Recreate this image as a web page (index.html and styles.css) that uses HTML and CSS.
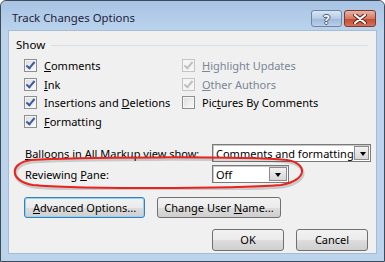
FILE: index.html
```html
<!DOCTYPE html>
<html lang="en">
<head>
  <meta charset="UTF-8">
  <title>Track Changes Options</title>
  <link rel="stylesheet" href="styles.css">
</head>
<body>
  <div class="window">
    <div class="titlebar">
      <span class="title">Track Changes Options</span>
      <div class="caption-buttons">
        <div class="cap-btn help">?</div>
        <div class="cap-btn close">
          <svg width="14" height="10" viewBox="0 0 14 10">
            <path d="M2 1 L12 9 M12 1 L2 9" stroke="#5a2316" stroke-width="4" stroke-linecap="round"/>
            <path d="M2 1 L12 9 M12 1 L2 9" stroke="#fff" stroke-width="2.2" stroke-linecap="round"/>
          </svg>
        </div>
      </div>
    </div>

    <div class="client">
      <div class="group-head">
        <span>Show</span>
        <div class="rule"></div>
      </div>

      <div class="checks">
        <label class="check"><span class="box checked"></span><span><u>C</u>omments</span></label>
        <label class="check disabled"><span class="box checked"></span><span><u>H</u>ighlight Updates</span></label>
        <label class="check"><span class="box checked"></span><span><u>I</u>nk</span></label>
        <label class="check disabled"><span class="box checked"></span><span><u>O</u>ther Authors</span></label>
        <label class="check"><span class="box checked"></span><span>Insertions and <u>D</u>eletions</span></label>
        <label class="check"><span class="box"></span><span>Pic<u>t</u>ures By Comments</span></label>
        <label class="check"><span class="box checked"></span><span><u>F</u>ormatting</span></label>
      </div>

      <div class="field-row balloons">
        <span class="field-label"><u>B</u>alloons in All Markup view show:</span>
        <div class="combo wide">
          <span class="combo-value">Comments and formatting</span>
          <span class="combo-btn"></span>
        </div>
      </div>

      <div class="field-row pane">
        <span class="field-label">Reviewing <u>P</u>ane:</span>
        <div class="combo narrow">
          <span class="combo-value">Off</span>
          <span class="combo-btn"></span>
        </div>
        <svg class="oval" width="296" height="34" viewBox="0 0 296 34">
          <path d="M21 6 C 60 3, 232 2, 277 6 C 297 9, 299 26, 271 31 C 221 35, 61 35, 23 31 C -1 27, -1 9, 21 6 Z" fill="none" stroke="rgba(0,0,0,0.16)" stroke-width="3"/>
          <path d="M20 4 C 60 1, 230 0, 276 4 C 296 7, 298 24, 270 29 C 220 33, 60 33, 22 29 C -2 25, -2 7, 20 4 Z" fill="none" stroke="#e8221c" stroke-width="2"/>
        </svg>
      </div>

      <div class="button-row">
        <div class="btn focused"><span><u>A</u>dvanced Options...</span></div>
        <div class="btn"><span>Change User <u>N</u>ame...</span></div>
      </div>

      <div class="button-row footer">
        <div class="btn dlg"><span>OK</span></div>
        <div class="btn dlg"><span>Cancel</span></div>
      </div>
    </div>
  </div>
</body>
</html>
```

FILE: styles.css
```css
body {
  margin: 0;
  background: #fff;
  font-family: "Noto Sans", "Open Sans", sans-serif;
  font-size: 11px;
  color: #000;
}
.window {
  width: 383px;
  height: 260px;
  border: 1px solid #3e4a57;
  border-radius: 6px 6px 0 0;
  background: #bcd3ec;
  display: flex;
  flex-direction: column;
}
.titlebar {
  height: 29px;
  display: flex;
  align-items: flex-start;
  justify-content: space-between;
  background: linear-gradient(#a8c4e4, #bad2ec);
  border-radius: 6px 6px 0 0;
}
.title {
  margin: 9px 0 0 11px;
  font-size: 11.4px;
  color: #1e1e3c;
}
.caption-buttons {
  display: flex;
  gap: 2px;
  margin: 9px 8px 0 0;
}
.cap-btn {
  width: 29px;
  height: 15px;
  border-radius: 3px;
  display: flex;
  align-items: center;
  justify-content: center;
}
.help {
  border: 1px solid #6d86a8;
  background: linear-gradient(#dbe6f3 0%, #b5cbe4 50%, #9cb8da 51%, #bcd0e8 100%);
  color: #fff;
  font-weight: bold;
  font-size: 13px;
  text-shadow: 0 0 1px #2e4466, 1px 0 0 #4d6688, -1px 0 0 #4d6688, 0 1px 0 #4d6688, 0 -1px 0 #4d6688;
}
.close {
  width: 30px;
  border: 1px solid #7e3b2c;
  background: linear-gradient(#e8b3a6 0%, #d67862 50%, #c4472e 51%, #d5735a 100%);
}
.client {
  flex: 1;
  margin: 0 7px 7px 7px;
  background: #f0f0f0;
  border: 1px solid #a5bcd6;
  padding: 0 8px 0 7px;
  display: flex;
  flex-direction: column;
}
.group-head {
  display: flex;
  align-items: center;
  gap: 6px;
  margin-top: 5px;
  height: 17px;
  font-size: 11.5px;
}
.rule {
  flex: 1;
  height: 1px;
  background: #d5dfe5;
  margin-top: 1px;
}
.checks {
  display: grid;
  grid-template-columns: 158px 1fr;
  grid-auto-rows: 18.7px;
  margin: 3px 0 0 8px;
}
.check {
  display: flex;
  align-items: center;
  gap: 7px;
  white-space: nowrap;
}
.check.disabled {
  color: #7b8595;
}
.box {
  width: 11px;
  height: 11px;
  border: 1px solid #8e8f8f;
  background: linear-gradient(135deg, #dcdcdc, #fbfbfb);
  box-shadow: inset 0 0 0 1px #f4f4f4;
  position: relative;
  flex-shrink: 0;
}
.box.checked::after {
  content: "";
  position: absolute;
  left: 3px;
  top: 0px;
  width: 3px;
  height: 7px;
  border: solid #3d5aa0;
  border-width: 0 2px 2px 0;
  transform: rotate(40deg);
}
.disabled .box {
  border-color: #c4c4c4;
  background: #f4f4f4;
}
.disabled .box.checked::after {
  border-color: #c0c0c0;
}
.field-row {
  display: flex;
  align-items: center;
  margin-left: 9px;
  height: 19px;
  position: relative;
}
.balloons {
  margin-top: 13px;
}
.pane {
  margin-top: 2px;
}
.field-label {
  width: 187px;
  flex-shrink: 0;
  white-space: nowrap;
}
.combo {
  height: 16px;
  flex-shrink: 0;
  border: 1px solid #7a7a7a;
  background: #fff;
  display: flex;
  align-items: center;
  justify-content: space-between;
  box-shadow: inset 1px 1px 0 #c8c8c8;
}
.combo.wide {
  width: 157px;
}
.combo.narrow {
  width: 75px;
}
.combo-value {
  padding-left: 3px;
  white-space: nowrap;
}
.combo-btn {
  width: 18px;
  height: 14px;
  margin-right: 1px;
  background: linear-gradient(#f2f2f2, #d6d6d6);
  border: 1px solid #8c8c8c;
  box-sizing: border-box;
  position: relative;
}
.combo-btn::after {
  content: "";
  position: absolute;
  left: 5px;
  top: 5px;
  border-left: 3.5px solid transparent;
  border-right: 3.5px solid transparent;
  border-top: 4px solid #000;
}
.oval {
  position: absolute;
  left: -14px;
  top: -9px;
  pointer-events: none;
}
.button-row {
  display: flex;
  gap: 12px;
  margin: 13px 0 0 8px;
}
.footer {
  justify-content: flex-end;
  margin: 11px 0 0 0;
}
.btn {
  height: 19px;
  padding: 0 11px;
  border: 1px solid #707070;
  border-radius: 3px;
  background: linear-gradient(#f2f2f2 0%, #ebebeb 50%, #dddddd 51%, #cfcfcf 100%);
  display: flex;
  align-items: center;
  justify-content: center;
  white-space: nowrap;
}
.btn.focused {
  border-color: #3c7fb1;
  box-shadow: inset 0 0 0 1px #8fd4f5;
  width: 97px;
}
.btn:not(.focused):not(.dlg) {
  width: 100px;
}
.btn.dlg {
  width: 48px;
  height: 20px;
}
```
